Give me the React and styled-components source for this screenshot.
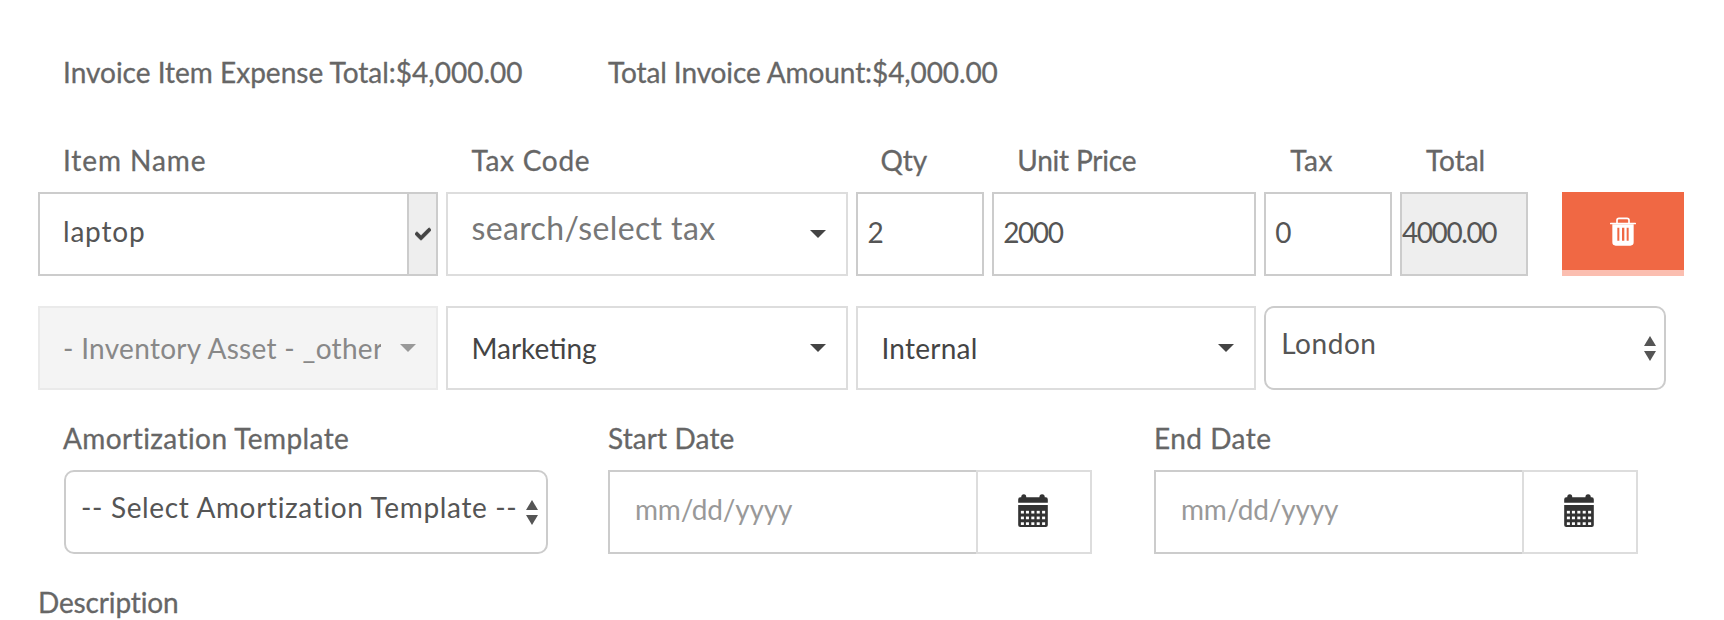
import React from "react";
import styled, { createGlobalStyle } from "styled-components";
import { FaCheck } from "react-icons/fa";

const Global = createGlobalStyle`
  html, body { margin: 0; padding: 0; background: #fff; height: 620px; overflow: hidden; }
  body { font-family: Lato, "Liberation Sans", sans-serif; }
`;

const Page = styled.div`
  width: 1724px;
  height: 620px;
  padding: 52px 40px 0 38px;
  box-sizing: border-box;
  overflow: hidden;
  font-size: 28px;
  color: #666;
`;

const Summary = styled.div`
  display: flex;
  padding-left: 25px;
  margin-bottom: 48px;
`;

const SummaryItem = styled.div`
  width: ${(p) => p.$width}px;
  line-height: 40px;
  letter-spacing: ${(p) => p.$ls ?? 0}px;
  white-space: nowrap;
  -webkit-text-stroke: 0.3px #666;
`;

const ItemGrid = styled.div`
  display: grid;
  grid-template-columns: 400px 401.6px 127.4px 263.6px 127.4px 128px 122px;
  column-gap: 8.4px;
  row-gap: 12px;
`;

const ColumnLabel = styled.div`
  line-height: 40px;
  padding-left: ${(p) => p.$inset ?? 25}px;
  letter-spacing: ${(p) => p.$ls ?? 0}px;
  white-space: nowrap;
  -webkit-text-stroke: 0.3px #666;
`;

const Row = styled.div`
  display: grid;
  grid-template-columns: 400px 401.6px 399.4px 401.8px;
  column-gap: 8.4px;
  margin-top: 30px;
`;

const Field = styled.div`
  height: 84px;
  box-sizing: border-box;
  border: 2px solid #ccc;
  background: ${(p) => p.$bg || "#fff"};
  display: flex;
  align-items: center;
  padding: 0 ${(p) => p.$pad ?? 9}px 4px;
  color: #555;
  letter-spacing: -1.4px;
  white-space: nowrap;
  overflow: hidden;
`;

const ItemInput = styled(Field)`
  padding: 0;
  letter-spacing: 0.8px;
`;

const ItemText = styled.div`
  flex: 1;
  padding: 0 0 6px 23px;
`;

const CheckAddon = styled.div`
  width: 29px;
  height: 100%;
  box-sizing: border-box;
  background: #eee;
  border-left: 2px solid #ccc;
  display: flex;
  align-items: center;
  justify-content: center;
  padding-bottom: 1px;
  color: #444;
  font-size: 16px;
  svg {
    stroke: currentColor;
    stroke-width: 30px;
  }
`;

const SelectBox = styled.div`
  height: 84px;
  box-sizing: border-box;
  border: 2px solid ${(p) => (p.$disabled ? "#eaeaea" : "#ddd")};
  background: ${(p) => (p.$disabled ? "#f4f4f4" : "#fff")};
  display: flex;
  align-items: center;
  padding: 0 20px 0 23px;
  color: ${(p) => p.$color || "#444"};
  font-size: ${(p) => p.$size || 28}px;
`;

const SelectText = styled.div`
  flex: 1;
  min-width: 0;
  overflow: hidden;
  white-space: nowrap;
  letter-spacing: ${(p) => p.$ls ?? 0}px;
  transform: translateY(${(p) => p.$shift || 0}px);
`;

const Caret = styled.span`
  flex: none;
  margin-left: 19px;
  width: 0;
  height: 0;
  border-left: 8px solid transparent;
  border-right: 8px solid transparent;
  border-top: 8px solid ${(p) => p.$color || "#444"};
`;

const NativeSelect = styled.div`
  height: 84px;
  box-sizing: border-box;
  border: 2px solid #ccc;
  border-radius: 10px;
  display: flex;
  align-items: center;
  padding: 0 8px 0 15px;
  color: #555;
  white-space: nowrap;
`;

const Stepper = styled.div`
  margin-left: 4px;
  display: flex;
  flex-direction: column;
  gap: 5px;
  flex: none;
`;

const Tri = styled.span`
  width: 0;
  height: 0;
  border-left: 6.5px solid transparent;
  border-right: 6.5px solid transparent;
  ${(p) => (p.$up ? "border-bottom: 10px solid #555;" : "border-top: 10px solid #555;")}
`;

const DeleteButton = styled.button`
  height: 84px;
  padding: 0;
  margin-left: 25.6px;
  width: 122px;
  box-sizing: border-box;
  border: 0;
  border-bottom: 6px solid #fbbeb0;
  background: #f06844;
  display: flex;
  align-items: center;
  justify-content: center;
`;

const Schedule = styled.div`
  display: flex;
  margin-top: 28px;
`;

const ScheduleCol = styled.div`
  width: ${(p) => p.$width}px;
  flex: none;
`;

const ScheduleLabel = styled.div`
  line-height: 40px;
  margin-bottom: 12px;
  padding-left: ${(p) => p.$inset ?? 0}px;
  letter-spacing: ${(p) => p.$ls ?? 0}px;
  white-space: nowrap;
  -webkit-text-stroke: 0.3px #666;
`;

const TemplateSlot = styled.div`
  margin-left: 26px;
  width: 484px;
`;

const DateGroup = styled.div`
  display: flex;
  width: 484px;
  height: 84px;
`;

const DateInput = styled.div`
  flex: 1;
  box-sizing: border-box;
  border: 2px solid #ccc;
  border-right: 0;
  display: flex;
  align-items: center;
  padding: 0 0 6px 25px;
  color: #999;
  letter-spacing: -0.2px;
`;

const DateAddon = styled.div`
  width: 116px;
  box-sizing: border-box;
  border: 2px solid #ddd;
  display: flex;
  align-items: center;
  justify-content: center;
  padding: 0 2px 3px 0;
`;

const Description = styled.div`
  margin-top: 28px;
  line-height: 40px;
  letter-spacing: -0.15px;
  -webkit-text-stroke: 0.3px #666;
`;

const TrashIcon = () => (
  <svg width="26" height="29" viewBox="0 0 78 85" fill="#fff" aria-hidden="true">
    <rect x="0" y="16" width="78" height="5" rx="2" />
    <path d="M21 17V9Q21 3 27 3H51Q57 3 57 9V17" fill="none" stroke="#fff" strokeWidth="5" />
    <path
      fillRule="evenodd"
      d="M7 21H71V75Q71 85 61 85H17Q7 85 7 75ZM22 31V70H28V31ZM36 31V70H43V31ZM50 31V70H56V31Z"
    />
  </svg>
);

const CalendarIcon = () => {
  const xs = [8, 23, 39, 55, 71];
  const ys = [50, 67, 84];
  return (
    <svg width="30" height="33" viewBox="0 0 88 98" aria-hidden="true">
      <path fill="#333" d="M0 26V16Q0 10 6 10H9Q9 1 17 1Q24 1 24 10H63Q63 1 71 1Q79 1 79 10H82Q88 10 88 16V26Z" />
      <path fill="#333" d="M0 33H88V92Q88 98 82 98H6Q0 98 0 92Z" />
      {ys.map((y) => xs.map((x) => <rect key={`${x}-${y}`} x={x} y={y} width="9" height="8" fill="#fff" />))}
    </svg>
  );
};

export default function App() {
  return (
    <Page>
      <Global />
      <Summary>
        <SummaryItem $width={545} $ls={0}>Invoice Item Expense Total:$4,000.00</SummaryItem>
        <SummaryItem $width={500} $ls={-0.1}>Total Invoice Amount:$4,000.00</SummaryItem>
      </Summary>

      <ItemGrid>
        <ColumnLabel $ls={0.94}>Item Name</ColumnLabel>
        <ColumnLabel $ls={0.73}>Tax Code</ColumnLabel>
        <ColumnLabel $inset={24}>Qty</ColumnLabel>
        <ColumnLabel $inset={25} $ls={-0.2}>Unit Price</ColumnLabel>
        <ColumnLabel $inset={26} $ls={0.6}>Tax</ColumnLabel>
        <ColumnLabel $inset={26}>Total</ColumnLabel>
        <div />

        <ItemInput>
          <ItemText>laptop</ItemText>
          <CheckAddon>
            <FaCheck />
          </CheckAddon>
        </ItemInput>
        <SelectBox $color="#777" $size={32}>
          <SelectText $shift={-7} $ls={0.39}>search/select tax</SelectText>
          <Caret />
        </SelectBox>
        <Field>2</Field>
        <Field>2000</Field>
        <Field>0</Field>
        <Field $bg="#eee" $pad={0}>4000.00</Field>
        <DeleteButton aria-label="Delete">
          <TrashIcon />
        </DeleteButton>
      </ItemGrid>

      <Row>
        <SelectBox $disabled $color="#888">
          <SelectText $ls={0.3}>- Inventory Asset - _other</SelectText>
          <Caret $color="#999" />
        </SelectBox>
        <SelectBox>
          <SelectText>Marketing</SelectText>
          <Caret />
        </SelectBox>
        <SelectBox>
          <SelectText $ls={0.27}>Internal</SelectText>
          <Caret />
        </SelectBox>
        <NativeSelect>
          <SelectText $shift={-5} $ls={0.55}>London</SelectText>
          <Stepper>
            <Tri $up />
            <Tri />
          </Stepper>
        </NativeSelect>
      </Row>

      <Schedule>
        <ScheduleCol $width={570}>
          <ScheduleLabel $inset={25} $ls={0.42}>Amortization Template</ScheduleLabel>
          <TemplateSlot>
            <NativeSelect>
              <SelectText $shift={-5} $ls={0.65}>-- Select Amortization Template --</SelectText>
              <Stepper>
                <Tri $up />
                <Tri />
              </Stepper>
            </NativeSelect>
          </TemplateSlot>
        </ScheduleCol>
        <ScheduleCol $width={546}>
          <ScheduleLabel $ls={0.1}>Start Date</ScheduleLabel>
          <DateGroup>
            <DateInput>mm/dd/yyyy</DateInput>
            <DateAddon>
              <CalendarIcon />
            </DateAddon>
          </DateGroup>
        </ScheduleCol>
        <ScheduleCol $width={484}>
          <ScheduleLabel $ls={0.47}>End Date</ScheduleLabel>
          <DateGroup>
            <DateInput>mm/dd/yyyy</DateInput>
            <DateAddon>
              <CalendarIcon />
            </DateAddon>
          </DateGroup>
        </ScheduleCol>
      </Schedule>

      <Description>Description</Description>
    </Page>
  );
}
